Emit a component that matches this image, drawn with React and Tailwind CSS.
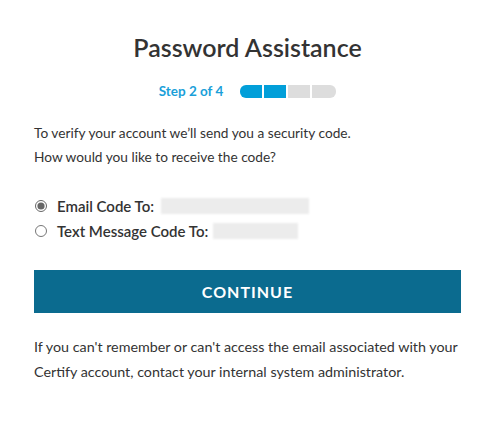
export default function App() {
  const steps = [true, true, false, false];
  return (
    <div
      className="w-[495px] h-[422px] bg-white text-[#333] overflow-hidden"
      style={{ fontFamily: "Lato, 'Noto Sans', sans-serif" }}
    >
      <div className="px-[34px] pt-[32px]">
        <h1 className="text-center text-[25px] leading-[30px] font-semibold text-[#333]">
          Password Assistance
        </h1>

        <div className="mt-[19px] flex items-center justify-center gap-[17px]">
          <span className="text-[13.5px] font-bold text-[#1a9fd9]">Step 2 of 4</span>
          <div className="flex gap-[2px]">
            {steps.map((on, i) => (
              <div
                key={i}
                className={
                  "h-[13px] w-[22px] " +
                  (on ? "bg-[#029fd9] " : "bg-[#dddddd] ") +
                  (i === 0 ? "rounded-l-[6px] " : "") +
                  (i === 3 ? "rounded-r-[6px] w-[24px]" : "")
                }
              />
            ))}
          </div>
        </div>

        <p className="mt-[20px] text-[13.7px] leading-[24px]">
          To verify your account we’ll send you a security code.
          <br />
          How would you like to receive the code?
        </p>

        <div className="mt-[28px] flex flex-col gap-[8px] text-[15px]">
          <label className="flex items-center h-[17px]">
            <input type="radio" name="via" defaultChecked className="w-[12px] h-[12px] ml-[1px] mr-[10px] accent-[#666]" />
            <span className="font-semibold">Email Code To:</span>
            <span className="ml-[7px] h-[16px] w-[148px] bg-[#ececec] blur-[1px]" />
          </label>
          <label className="flex items-center h-[17px]">
            <input type="radio" name="via" className="w-[12px] h-[12px] ml-[1px] mr-[10px]" />
            <span className="font-semibold">Text Message Code To:</span>
            <span className="ml-[5px] h-[16px] w-[85px] bg-[#ececec] blur-[1px]" />
          </label>
        </div>

        <button
          type="button"
          className="mt-[31px] w-full h-[43px] bg-[#0b6b8f] text-white text-[16px] font-bold tracking-[1px]"
        >
          CONTINUE
        </button>

        <p className="mt-[21px] text-[14.3px] leading-[25px]">
          If you can't remember or can't access the email associated with your Certify account, contact your
          internal system administrator.
        </p>
      </div>
    </div>
  );
}
